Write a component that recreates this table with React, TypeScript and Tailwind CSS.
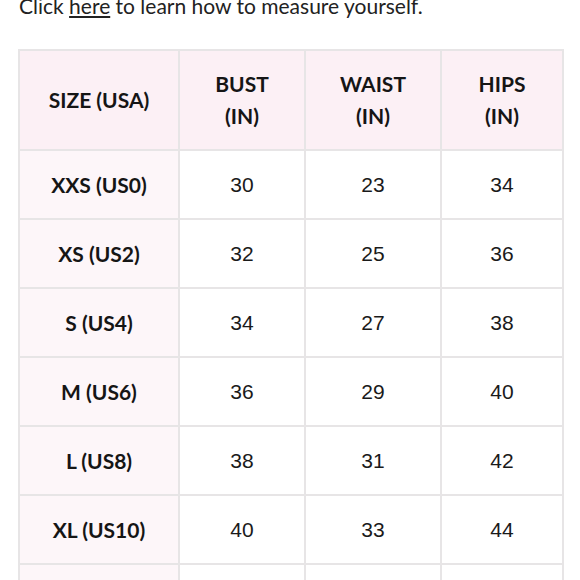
const rows = [
  { size: "XXS (US0)", bust: "30", waist: "23", hips: "34" },
  { size: "XS (US2)", bust: "32", waist: "25", hips: "36" },
  { size: "S (US4)", bust: "34", waist: "27", hips: "38" },
  { size: "M (US6)", bust: "36", waist: "29", hips: "40" },
  { size: "L (US8)", bust: "38", waist: "31", hips: "42" },
  { size: "XL (US10)", bust: "40", waist: "33", hips: "44" },
  { size: "XXL (US12)", bust: "42", waist: "35", hips: "46" },
];

const lato = "font-['Lato','Noto_Sans',sans-serif]";
const num = "font-['Liberation_Sans',Arial,sans-serif]";

export default function App() {
  return (
    <div className="w-[580px] h-[580px] overflow-hidden bg-white">
      <p className={`${lato} -mt-[8px] ml-[19px] text-[21px] leading-[28px] text-[#222]`}>
        Click <span className="underline underline-offset-2">here</span> to learn how to measure yourself.
      </p>

      {/* size chart */}
      <div className="ml-[18px] mt-[29px] w-fit grid grid-cols-[158px_124px_134px_120px] gap-[2px] bg-[#e7e5e6] p-[2px]">
        <div className={`${lato} h-[98px] bg-[#fcf0f5] flex items-center justify-center text-[21px] font-bold text-[#151515]`}>
          SIZE (USA)
        </div>
        {["BUST", "WAIST", "HIPS"].map((h) => (
          <div
            key={h}
            className={`${lato} h-[98px] bg-[#fcf0f5] flex flex-col items-center justify-center text-[21px] leading-[32px] font-bold text-[#151515]`}
          >
            <span>{h}</span>
            <span>(IN)</span>
          </div>
        ))}

        {rows.map((r) => (
          <div key={r.size} className="contents">
            <div className={`${lato} h-[67px] bg-[#fdf6f9] flex items-center justify-center text-[21px] font-bold text-[#151515]`}>
              {r.size}
            </div>
            {[r.bust, r.waist, r.hips].map((v, i) => (
              <div key={i} className={`${num} h-[67px] bg-white flex items-center justify-center text-[21px] text-[#1a1a1a]`}>
                {v}
              </div>
            ))}
          </div>
        ))}
      </div>
    </div>
  );
}
